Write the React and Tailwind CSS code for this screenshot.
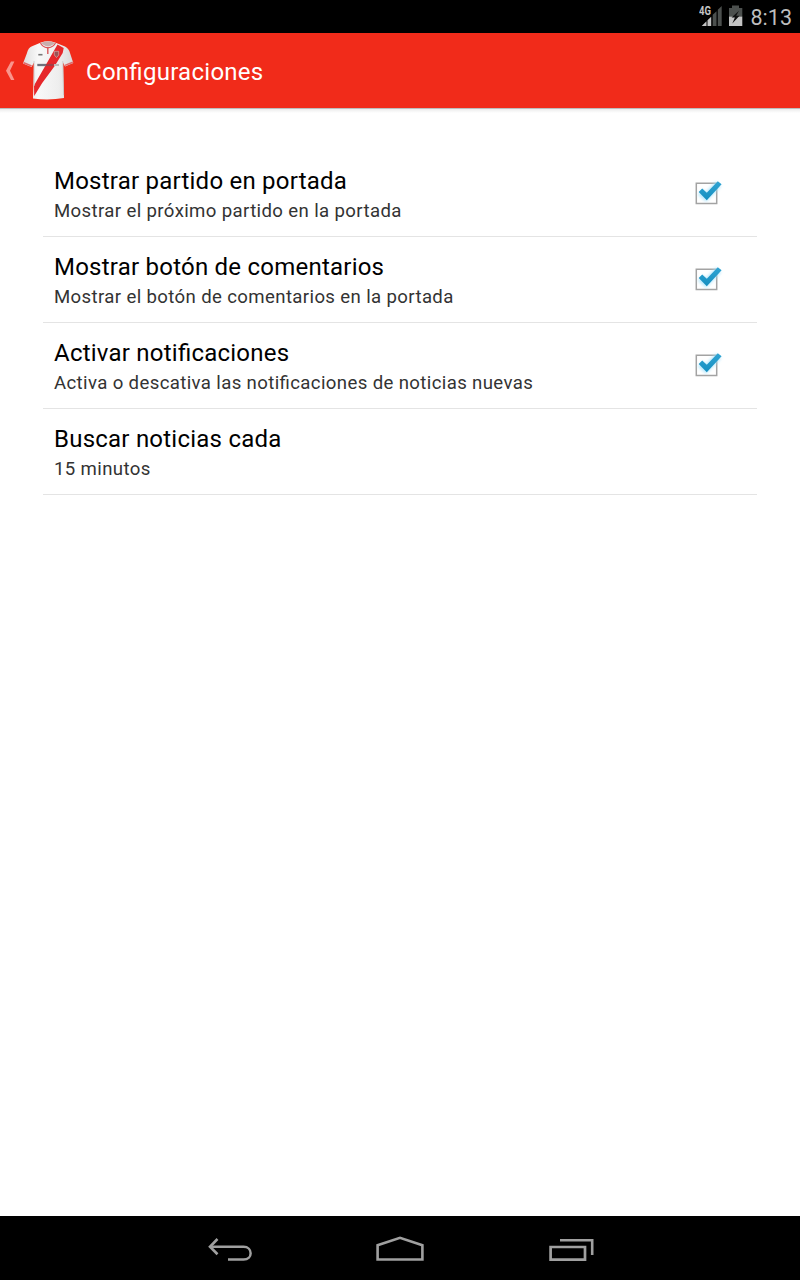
const settings = [
  { title: 'Mostrar partido en portada', summary: 'Mostrar el próximo partido en la portada', checked: true },
  { title: 'Mostrar botón de comentarios', summary: 'Mostrar el botón de comentarios en la portada', checked: true },
  { title: 'Activar notificaciones', summary: 'Activa o descativa las notificaciones de noticias nuevas', checked: true },
  { title: 'Buscar noticias cada', summary: '15 minutos', checked: false },
];

function StatusBar() {
  return (
    <div className="flex h-[33px] shrink-0 items-center justify-end bg-black pr-2 text-[#bebebe]">
      <svg className="h-[33px] w-[52px] shrink-0" viewBox="0 0 52 33" aria-hidden="true">
        <g fill="#4c504e">
          <path d="M13.7 14.8L17.5 11.3V26H13.7z" />
          <path d="M18.8 9.8L22.7 6V26H18.8z" />
          <path d="M30 8H33V5.5H40V8H43.3V16.5H30z" />
        </g>
        <path d="M2.7 26L7.5 21.2V26z M8.5 20.2L12.2 16.8V26H8.5z" fill="#c4c4c4" />
        <path d="M30 16.5H43.3V26H30z" fill="#c4c4c4" />
        <path d="M40 10.8L32.6 17.6H35.9L33.3 23.4L40.5 15.8H37.2z" fill="#111" />
        <text x="0" y="15" fontSize="12" fontWeight="700" textLength="12" lengthAdjust="spacingAndGlyphs" fill="#c4c4c4" fontFamily="Roboto, sans-serif">4G</text>
      </svg>
      <span className="relative top-px text-[21.5px] leading-[33px]">8:13</span>
    </div>
  );
}

function Shirt() {
  return (
    <svg className="h-[60px] w-[52px]" viewBox="0 0 52 60" aria-hidden="true">
      <defs>
        <linearGradient id="cloth">
          <stop offset="0" stopColor="#dedede" />
          <stop offset=".3" stopColor="#f8f8f8" />
          <stop offset=".7" stopColor="#eeeeee" />
          <stop offset="1" stopColor="#d9d9d9" />
        </linearGradient>
      </defs>
      <path d="M19 1.5Q26 -1 33 1.5L43 5.5Q47 7.5 48 12L51.3 22L43 25.5L41 21.5L42 57Q27 59.5 11 57.5L12 21.5L9.5 26L1 22.5L5 12Q6 7 10 5.2z" fill="url(#cloth)" />
      <path d="M35.5 3.5L41.7 7L40.7 12L32.7 25L20.2 42L12.2 55L12 44.5L23.2 25z" fill="#e6272b" />
      <path d="M19 1.8Q26 -.7 33 1.8Q31 4.6 26 5.6Q21 4.6 19 1.8z" fill="#c9aead" />
      <path d="M18.5 2Q20 5.8 25.8 6.9Q32 5.8 33.5 2" fill="none" stroke="#db5256" strokeWidth="1.1" />
      <path d="M25.8 6V13" stroke="#d9575a" strokeWidth="1.4" />
      <path d="M1.7 21.7L9.6 25M43 24.4L50.8 21.3" stroke="#e0686a" strokeWidth="1.5" />
      <path d="M12 20L12.2 45M40.8 20L41.6 54" stroke="#c8c8c8" strokeWidth=".8" fill="none" />
      <path d="M16.3 13.7H20.5" stroke="#777" strokeWidth="1.6" />
      <path d="M15.3 24H24" stroke="#71717c" strokeWidth="2.3" />
      <path d="M24 24H31.5" stroke="#a43d45" strokeWidth="2.2" />
      <path d="M32 24H37" stroke="#bdbdbd" strokeWidth="2" />
      <path d="M32.3 10.3H36.7V14L34.5 16.5L32.3 14z" fill="#9b5355" stroke="#dbb" strokeWidth=".6" />
    </svg>
  );
}

function Header() {
  return (
    <header className="flex h-[75px] shrink-0 items-center bg-[#f12b1a] text-white">
      <svg className="ml-[5px] h-[22px] w-[11px]" viewBox="0 0 11 22" aria-hidden="true">
        <path d="M6 1.5H9.4L5 10.7L9.4 20H6L1 10.7z" fill="#f9958c" />
      </svg>
      <div className="ml-[6px] flex"><Shirt /></div>
      <h1 className="ml-3 pt-0.5 text-2xl font-normal tracking-[0.27px] whitespace-nowrap [font-feature-settings:'liga']">Configuraciones</h1>
    </header>
  );
}

function Check() {
  return (
    <svg className="mr-[33px] mb-px h-[36px] w-[36px] shrink-0" viewBox="0 0 36 36" aria-hidden="true">
      <defs>
        <filter id="glow" x="-40%" y="-40%" width="180%" height="180%">
          <feGaussianBlur stdDeviation="1.6" />
        </filter>
        <linearGradient id="tick" x1="0" y1="0" x2="0" y2="1">
          <stop offset="0" stopColor="#30a4d3" />
          <stop offset="1" stopColor="#168fc0" />
        </linearGradient>
      </defs>
      <path d="M8.3 8.2H28.7V28.6H8.3z" fill="#fff" stroke="#a3a3a3" strokeWidth="1.5" />
      <path d="M12.2 17L18 22L30.5 9" fill="none" stroke="#a6e2fb" strokeWidth="7" opacity=".8" filter="url(#glow)" />
      <path d="M10.7 17L14.2 13.4L18.8 17.8L29.8 6.2L33.6 9.2L18.8 25.2z" fill="url(#tick)" />
    </svg>
  );
}

function Setting({ title, summary, checked }) {
  return (
    <li className="flex h-[86px] items-center border-b border-[#e4e4e4] pl-[11px] [font-feature-settings:'liga']">
      <div className="grow pt-px">
        <div className="text-2xl leading-[32px] tracking-[0.23px] whitespace-nowrap text-black">{title}</div>
        <div className="-mb-px pt-px text-[18.6px] leading-[27px] tracking-[0.37px] whitespace-nowrap text-[#333]">{summary}</div>
      </div>
      {checked && <Check />}
    </li>
  );
}

function NavBar() {
  return (
    <nav className="flex h-16 shrink-0 items-center bg-black pl-[200px]">
      <svg className="h-16 w-[400px]" viewBox="0 0 400 64" fill="none" stroke="#a0a0a0" aria-hidden="true">
        <path d="M10 30.8H43.5C53 30.8 53 43.6 43.5 43.6H28" strokeWidth="2.5" />
        <path d="M17.5 23L10 30.8L17.5 38.2" strokeWidth="2.6" />
        <path d="M177.6 43.5V29.2L200 21.8L222.4 29.2V43.5z" strokeWidth="2.6" />
        <path d="M350.6 31H385V43.7H350.6z" strokeWidth="2.7" />
        <path d="M360 24.3H392.2V39" strokeWidth="2.6" />
      </svg>
    </nav>
  );
}

export default function App() {
  return (
    <div className="flex h-[1280px] w-[800px] flex-col overflow-hidden bg-white font-['Roboto',sans-serif]">
      <StatusBar />
      <Header />
      <div className="h-[5px] shrink-0 border-t border-[#bdbdbd] bg-linear-to-b from-[#ececec] to-white" />
      <main className="grow px-[43px] pt-[38px]">
        <ul>
          {settings.map((s) => <Setting key={s.title} {...s} />)}
        </ul>
      </main>
      <NavBar />
    </div>
  );
}
